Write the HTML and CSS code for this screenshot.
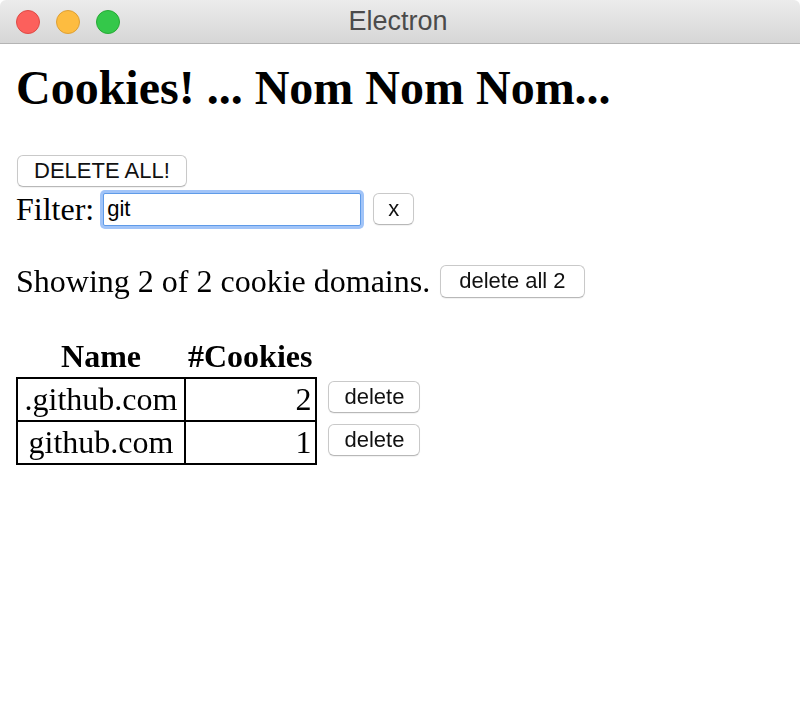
FILE: index.html
```html
<!DOCTYPE html>
<html>
<head>
<meta charset="utf-8">
<title>Electron</title>
<link rel="stylesheet" href="styles.css">
</head>
<body>
<div class="window">
  <div class="titlebar">
    <div class="lights">
      <span class="light red"></span>
      <span class="light yellow"></span>
      <span class="light green"></span>
    </div>
    <div class="title">Electron</div>
  </div>
  <div class="content">
    <h1 class="heading">Cookies! ... Nom Nom Nom...</h1>
    <div class="row row-delete">
      <button class="btn btn-wide">DELETE ALL!</button>
    </div>
    <div class="row row-filter">
      <span class="label">Filter:</span>
      <input class="filter" type="text" value="git" autofocus>
      <button class="btn btn-x">x</button>
    </div>
    <div class="row row-showing">
      <span class="label">Showing 2 of 2 cookie domains.</span>
      <button class="btn btn-gap">delete all 2</button>
    </div>
    <table class="cookies">
      <thead>
        <tr><th class="col-name">Name</th><th class="col-count">#Cookies</th><th></th></tr>
      </thead>
      <tbody>
        <tr><td class="name">.github.com</td><td class="count">2</td><td class="action"><button class="btn btn-row">delete</button></td></tr>
        <tr><td class="name">github.com</td><td class="count">1</td><td class="action"><button class="btn btn-row">delete</button></td></tr>
      </tbody>
    </table>
  </div>
</div>
</body>
</html>
```

FILE: styles.css
```css
html, body {
  margin: 0;
  padding: 0;
  background: #ffffff;
}
.window {
  width: 800px;
  height: 720px;
  background: #ffffff;
  overflow: hidden;
}
.titlebar {
  height: 43px;
  border-bottom: 1px solid #b4b4b4;
  background: linear-gradient(#ececec, #d6d6d6);
  border-radius: 6px 6px 0 0;
  display: flex;
  align-items: center;
  justify-content: center;
  position: relative;
}
.lights {
  position: absolute;
  left: 16px;
  top: 10px;
  display: flex;
  gap: 16px;
}
.light {
  width: 22px;
  height: 22px;
  border-radius: 50%;
  display: block;
}
.red { background: #fc605c; border: 1px solid #df4a45; }
.yellow { background: #fdbc40; border: 1px solid #dea034; }
.green { background: #34c84a; border: 1px solid #27aa35; }
.title {
  font-family: "Liberation Sans", Arial, sans-serif;
  font-size: 27px;
  color: #4b4b4b;
  margin-left: -4px;
}
.content {
  padding: 16px;
  font-family: "Liberation Serif", "Times New Roman", serif;
  font-size: 32px;
  color: #000;
}
.heading {
  font-size: 48px;
  font-weight: bold;
  margin: 0 0 40px 0;
  line-height: 55px;
}
.row {
  display: flex;
  align-items: center;
}
.row-delete {
  height: 32px;
}
.row-filter {
  height: 44px;
}
.row-showing {
  margin-top: 31px;
  height: 38px;
}
.label {
  line-height: 37px;
}
.btn {
  font-family: "Liberation Sans", Arial, sans-serif;
  font-size: 22px;
  color: #111;
  background: #ffffff;
  border: 1px solid #c9c9c9;
  border-bottom-color: #b8b8b8;
  border-radius: 6px;
  height: 32px;
  padding: 0 17px;
  box-shadow: 0 1px 1px rgba(0, 0, 0, 0.06);
  margin: 0;
}
.btn-wide {
  padding: 0 16px;
  margin-left: 1px;
}
.btn-x {
  margin-left: 12px;
  padding: 0 14px;
}
.btn-gap {
  margin-left: 10px;
  height: 33px;
  padding: 0 18px;
}
.btn-row {
  display: block;
  padding: 0 15px;
}
.filter {
  margin-left: 9px;
  width: 258px;
  height: 33px;
  box-sizing: border-box;
  border: 1px solid #5f9be8;
  box-shadow: 0 0 0 3px rgba(110, 165, 245, 0.65);
  border-radius: 2px;
  outline: none;
  padding: 0 3px;
  font-family: "Liberation Sans", Arial, sans-serif;
  font-size: 22px;
  color: #000;
  caret-color: #000;
}
.cookies {
  margin-top: 36px;
  border-collapse: collapse;
  font-size: 32px;
}
.cookies th {
  font-weight: bold;
  padding: 2px 2px;
  line-height: 37px;
  text-align: center;
}
.cookies td {
  line-height: 37px;
  padding: 2px 2px;
}
.cookies td.name,
.cookies td.count {
  border: 2px solid #000;
}
.col-name {
  width: 164px;
}
.cookies .col-count,
.cookies td.count {
  padding: 2px 4px 2px 3px;
}
.name {
  text-align: center;
}
.count {
  text-align: right;
}
.cookies td.action {
  padding: 3px 0 0 11px;
  vertical-align: top;
}
```
